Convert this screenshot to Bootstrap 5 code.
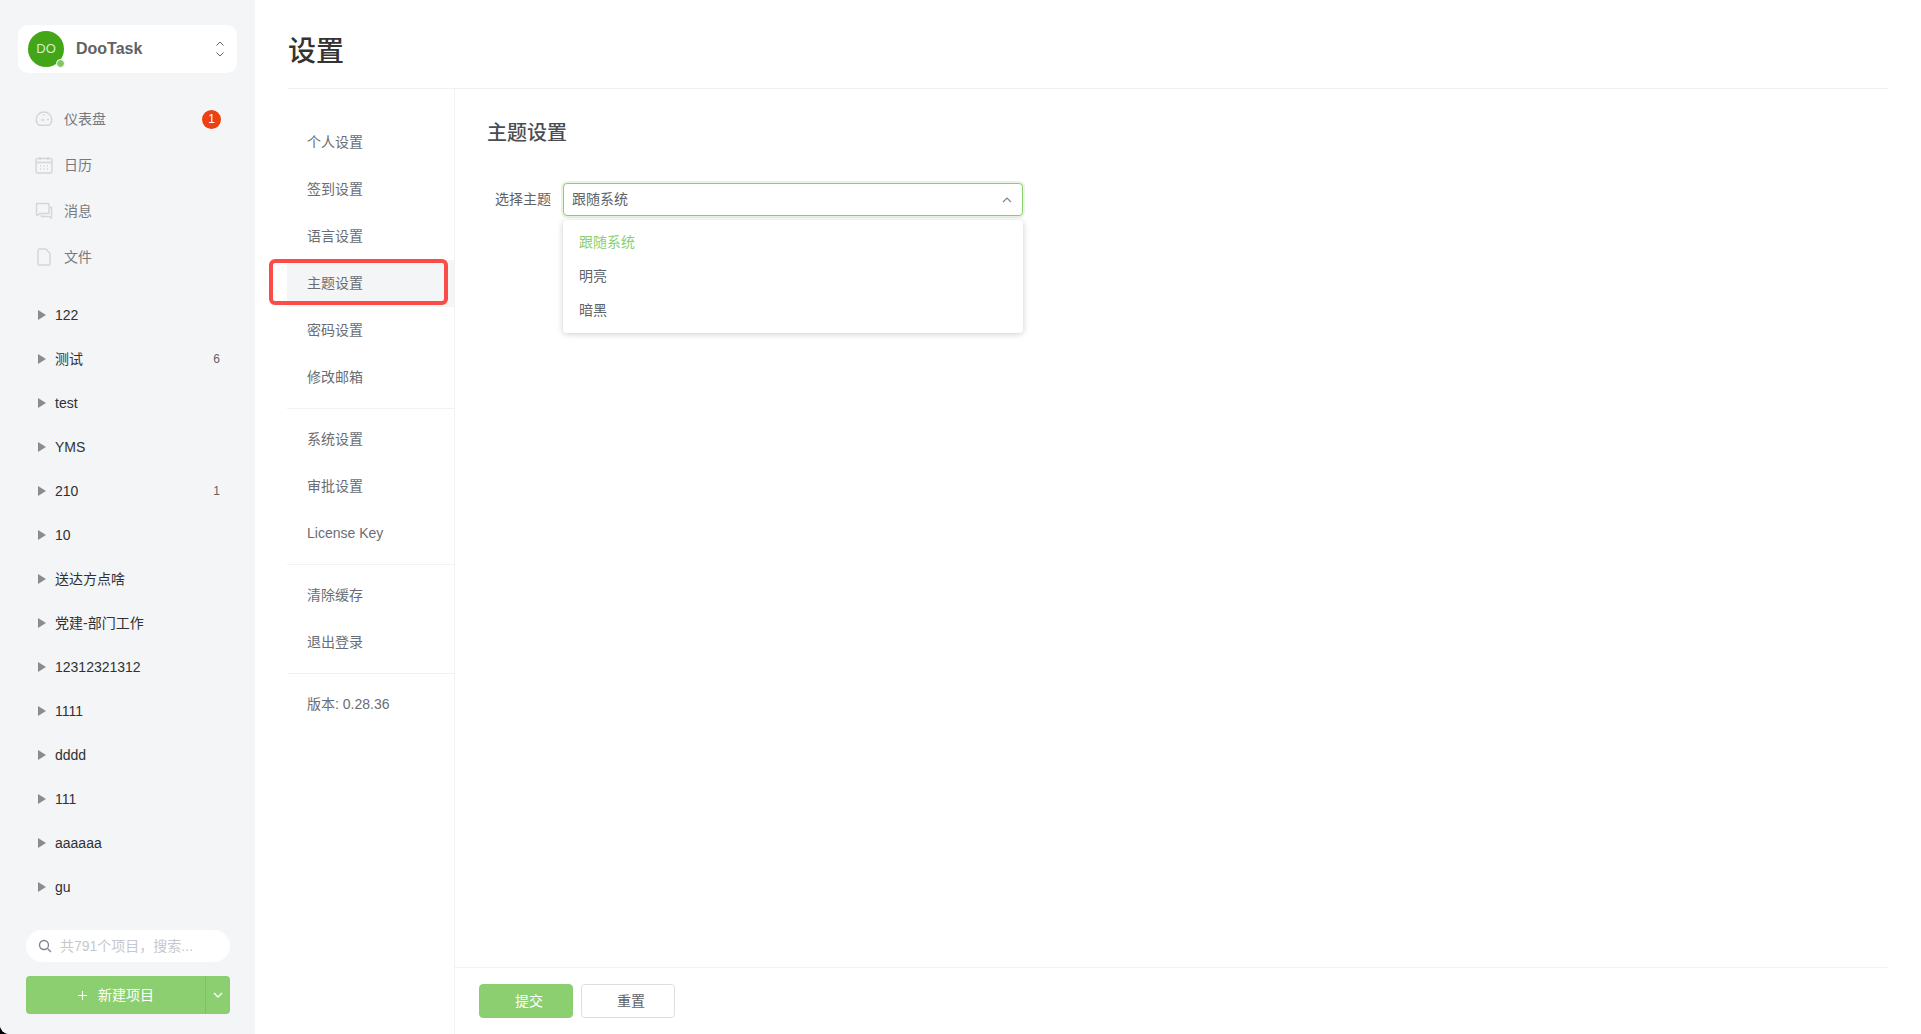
<!DOCTYPE html>
<html lang="zh">
<head>
<meta charset="utf-8">
<title>设置</title>
<link href="https://cdn.jsdelivr.net/npm/bootstrap@5.3.0/dist/css/bootstrap.min.css" rel="stylesheet">
<style>
html,body{height:100%;margin:0;background:#000;overflow:hidden}
body{font-family:"Liberation Sans","Noto Sans CJK SC",sans-serif;font-size:14px;color:#515a6e}
.app-shell{height:1034px;background:#fff;border-bottom-left-radius:9px;overflow:hidden}
.side-pane{width:255px;flex:none;background:#f4f5f7;padding:25px 18px 20px}
.side-pane>*{flex:none}
.org-card{height:48px;background:#fff;border-radius:10px;padding:0 12px 0 10px}
.org-avatar{width:36px;height:36px;border-radius:50%;background:#43a518;color:#d3f0c4;font-size:13px;line-height:36px;text-align:center;position:relative;flex:none}
.org-dot{position:absolute;right:-1px;bottom:-1px;width:9px;height:9px;border:1px solid #fff;border-radius:50%;background:#84c56a}
.org-name{font-size:16px;font-weight:700;color:#606266;margin-left:12px}
.main-menu{margin-top:23px;padding:0 0 0 17px}
.main-item{height:46px;color:#77797f;font-size:14px;padding-right:16px}
.main-item svg{width:18px;height:18px;margin-right:11px;flex:none}
.red-count{width:19px;height:19px;border-radius:50%;background:#ed4014;color:#fff;font-size:12px;line-height:19px;text-align:center}
.project-list{margin-top:13px;padding-left:20px}
.project-item{height:44px;color:#303133;font-size:14px;padding-right:17px}
.project-item i{width:0;height:0;border-left:8px solid #8c8c8c;border-top:5.5px solid transparent;border-bottom:5.5px solid transparent;margin-right:9px;flex:none}
.project-num{font-size:12px;color:#606266}
.search-box{height:32px;margin:21px 7px 0 8px;background:#fff;border-radius:16px;padding-left:12px;color:#c5c8ce;font-size:14px}
.search-box svg{margin-right:8px}
.new-btn{height:38px;margin:14px 7px 0 8px;background:#8bcf70;border-radius:4px;color:#fff;font-size:14px}
.new-main{flex:1;gap:10px}
.new-arrow{width:25px;height:100%;border-left:1px solid #7fc265}
.main-pane{padding:0 33px 0 33px;min-width:0}
.page-title{height:89px;margin:0;font-size:28px;font-weight:500;line-height:103px;color:#333;border-bottom:1px solid #f0f0f0;flex:none}
.set-menu{width:168px;flex:none;padding-top:30px;border-right:1px solid #f2f2f2;margin-left:-1px;height:945px}
.set-menu-item{height:47px;line-height:47px;padding-left:20px;color:#6a6d73;font-size:14px}
.set-menu-item.picked{background:#f4f5f7}
.set-sep{border-top:1px solid #f2f2f2;margin:7px 0 7px}
.red-mark{position:absolute;left:269px;top:259px;width:179px;height:46px;border:4px solid #fb4c48;border-radius:6px;pointer-events:none}
.form-pane{min-width:0}
.form-body{padding:0 32px;height:878px;position:relative}
.form-head{font-size:20px;font-weight:500;color:#4a4d52;margin:0;padding-top:29px;line-height:30px;height:60px}
.form-line{margin-top:34px}
.form-label-t{width:64px;margin:0 12px 0 0;color:#606266;font-size:14px;text-align:right;white-space:nowrap}
.select-box{width:460px;height:33px;border:1px solid #8bcf70;box-shadow:0 0 0 2px rgba(139,207,112,.2);border-radius:4px;padding:0 10px 0 8px;color:#606266;background:#fff}
.drop-list{position:absolute;left:108px;top:131px;width:460px;height:113px;background:#fff;border-radius:4px;box-shadow:0 1px 6px rgba(0,0,0,.2);padding:5px 0;margin:0;list-style:none}
.drop-list li{height:34px;line-height:34px;padding-left:16px;color:#606266}
.drop-list li.chosen{color:#8bcf70}
.form-foot{height:67px;border-top:1px solid #f2f2f2;padding:16px 0 0 24px;gap:8px}
.btn-ok,.btn-reset{width:94px;height:34px;border-radius:4px;padding:0 0 0 6px;font-size:14px;line-height:32px}
.btn-ok{background:#8bcf70;border:1px solid #8bcf70;color:#fff}
.btn-reset{background:#fff;border:1px solid #dcdee2;color:#606266}
</style>
</head>
<body>
<div class="app-shell d-flex">
  <aside class="side-pane d-flex flex-column">
    <div class="org-card d-flex align-items-center">
      <div class="org-avatar">DO<span class="org-dot"></span></div>
      <div class="org-name flex-grow-1">DooTask</div>
      <svg width="10" height="18" viewBox="0 0 10 18" fill="none" stroke="#606266" stroke-width="1"><path d="M1.500 5.500 5 2l3.500 3.500M1.500 12.500 5 16l3.500-3.500"/></svg>
    </div>
    <div class="main-menu">
      <div class="main-item d-flex align-items-center">
        <svg viewBox="0 0 18 18" fill="none" stroke="#d3d5d9" stroke-width="1.400"><path d="M4 15.200C2.200 14 1.200 11.900 1.200 9.500 1.200 5.300 4.700 2 9 2s7.800 3.300 7.800 7.500c0 2.400-1 4.500-2.800 5.700H4zM6 10h3.500M12 9.500h2M9 4v1.500"/></svg>
        <span class="flex-grow-1">仪表盘</span><span class="red-count">1</span>
      </div>
      <div class="main-item d-flex align-items-center">
        <svg viewBox="0 0 18 18" fill="none" stroke="#d3d5d9" stroke-width="1.400"><rect x="1" y="2.500" width="16" height="14.500" rx="1.500"/><path d="M5 1v3M13 1v3M1 6.500h16M5 10h1M8.500 10h1M12 10h1M5 13h1M8.500 13h1M12 13h1"/></svg>
        <span>日历</span>
      </div>
      <div class="main-item d-flex align-items-center">
        <svg viewBox="0 0 18 18" fill="none" stroke="#d3d5d9" stroke-width="1.400"><path d="M1.500 1.500h11.500a1 1 0 0 1 1 1v8a1 1 0 0 1-1 1H5l-2 1.500H1.500zM15 5.500h1.500V16L14 14.500H6.500V13"/></svg>
        <span>消息</span>
      </div>
      <div class="main-item d-flex align-items-center">
        <svg viewBox="0 0 18 18" fill="none" stroke="#d3d5d9" stroke-width="1.400"><path d="M3 2.500A1.500 1.500 0 0 1 4.500 1H11l4 4.500V15.500a1.500 1.500 0 0 1-1.500 1.500h-9A1.500 1.500 0 0 1 3 15.500z"/></svg>
        <span>文件</span>
      </div>
    </div>
    <div class="project-list">
      <div class="project-item d-flex align-items-center"><i></i><span class="flex-grow-1">122</span></div>
      <div class="project-item d-flex align-items-center"><i></i><span class="flex-grow-1">测试</span><span class="project-num">6</span></div>
      <div class="project-item d-flex align-items-center"><i></i><span class="flex-grow-1">test</span></div>
      <div class="project-item d-flex align-items-center"><i></i><span class="flex-grow-1">YMS</span></div>
      <div class="project-item d-flex align-items-center"><i></i><span class="flex-grow-1">210</span><span class="project-num">1</span></div>
      <div class="project-item d-flex align-items-center"><i></i><span class="flex-grow-1">10</span></div>
      <div class="project-item d-flex align-items-center"><i></i><span class="flex-grow-1">送达方点啥</span></div>
      <div class="project-item d-flex align-items-center"><i></i><span class="flex-grow-1">党建-部门工作</span></div>
      <div class="project-item d-flex align-items-center"><i></i><span class="flex-grow-1">12312321312</span></div>
      <div class="project-item d-flex align-items-center"><i></i><span class="flex-grow-1">1111</span></div>
      <div class="project-item d-flex align-items-center"><i></i><span class="flex-grow-1">dddd</span></div>
      <div class="project-item d-flex align-items-center"><i></i><span class="flex-grow-1">111</span></div>
      <div class="project-item d-flex align-items-center"><i></i><span class="flex-grow-1">aaaaaa</span></div>
      <div class="project-item d-flex align-items-center"><i></i><span class="flex-grow-1">gu</span></div>
    </div>
    <div class="search-box d-flex align-items-center">
      <svg width="14" height="14" viewBox="0 0 14 14" fill="none" stroke="#7d8394" stroke-width="1.300"><circle cx="6" cy="6" r="4.500"/><path d="m9.500 9.500 3.500 3.500"/></svg>
      <span>共791个项目，搜索...</span>
    </div>
    <div class="new-btn d-flex align-items-center">
      <div class="new-main d-flex align-items-center justify-content-center">
        <svg width="11" height="11" viewBox="0 0 11 11" stroke="#fff" stroke-width="1.100"><path d="M5.500 1v9M1 5.500h9"/></svg>
        <span>新建项目</span>
      </div>
      <div class="new-arrow d-flex align-items-center justify-content-center">
        <svg width="10" height="6" viewBox="0 0 10 6" fill="none" stroke="#fff" stroke-width="1.300"><path d="m1 1 4 4 4-4"/></svg>
      </div>
    </div>
  </aside>
  <main class="main-pane flex-grow-1 d-flex flex-column">
    <h1 class="page-title">设置</h1>
    <div class="d-flex flex-grow-1">
      <nav class="set-menu">
        <div class="set-menu-item">个人设置</div>
        <div class="set-menu-item">签到设置</div>
        <div class="set-menu-item">语言设置</div>
        <div class="set-menu-item picked">主题设置</div>
        <div class="set-menu-item">密码设置</div>
        <div class="set-menu-item">修改邮箱</div>
        <div class="set-sep"></div>
        <div class="set-menu-item">系统设置</div>
        <div class="set-menu-item">审批设置</div>
        <div class="set-menu-item">License Key</div>
        <div class="set-sep"></div>
        <div class="set-menu-item">清除缓存</div>
        <div class="set-menu-item">退出登录</div>
        <div class="set-sep"></div>
        <div class="set-menu-item">版本: 0.28.36</div>
      </nav>
      <section class="form-pane flex-grow-1">
        <div class="form-body">
          <h2 class="form-head">主题设置</h2>
          <div class="form-line d-flex align-items-center">
            <label class="form-label-t">选择主题</label>
            <div class="select-box d-flex align-items-center justify-content-between">
              <span>跟随系统</span>
              <svg width="10" height="6" viewBox="0 0 10 6" fill="none" stroke="#808695" stroke-width="1.200"><path d="m1 5 4-4 4 4"/></svg>
            </div>
          </div>
          <ul class="drop-list">
            <li class="chosen">跟随系统</li>
            <li>明亮</li>
            <li>暗黑</li>
          </ul>
        </div>
        <div class="form-foot d-flex">
          <button type="button" class="btn btn-ok">提交</button>
          <button type="button" class="btn btn-reset">重置</button>
        </div>
      </section>
    </div>
  </main>
</div>
<div class="red-mark"></div>
</body>
</html>
